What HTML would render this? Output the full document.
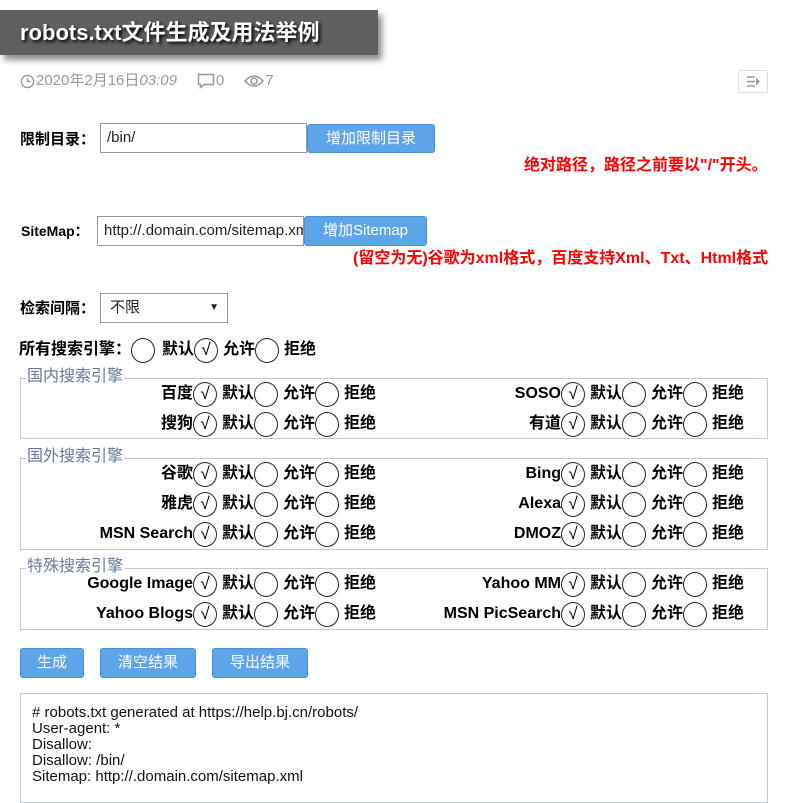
<!DOCTYPE html>
<html><head><meta charset="utf-8"><style>
*{margin:0;padding:0;box-sizing:border-box}
body{width:785px;height:785px;background:#fff;position:relative;overflow:hidden;font-family:"Liberation Sans","Noto Sans CJK SC",sans-serif;color:#000}
.a{position:absolute;white-space:nowrap}
.title{left:0;top:10px;width:378px;height:45px;background:#5f5f5f;box-shadow:4px 5px 6px rgba(0,0,0,.45);color:#fff;font-weight:bold;font-size:22px;line-height:45px;padding-left:20px;text-shadow:2px 2px 3px #000}
.meta{top:71px;left:20px;font-size:15px;color:#999;line-height:20px;display:flex;align-items:center}
.meta svg{margin-right:1px}
.lbl{font-size:15px;font-weight:bold}
.inp{border:1px solid #999;height:30px;font-size:15px;line-height:28px;padding-left:6px;color:#222;overflow:hidden;background:#fff}
.btn{background:#5ea4e8;border:1px solid #4a90d9;border-radius:3px;color:#fff;font-size:15px;text-align:center}
.red{color:#f00;font-weight:bold;font-size:16px}
.g{position:absolute;height:26px;display:flex;align-items:center;font-size:16px;font-weight:bold;line-height:26px}
.g .l{position:absolute;right:100%;top:0;line-height:26px;font-size:16px;font-weight:bold;white-space:nowrap}
.c{display:inline-block;width:24px;height:25px;border:1.5px solid #222;border-radius:50%;font-size:17px;line-height:22px;text-align:center;font-weight:normal;margin-right:5px;flex:none}
.t{display:inline-block;width:32px;font-weight:bold;white-space:nowrap;line-height:26px}
.fs{position:absolute;left:20px;width:748px;border:1px solid #c3c9d9}
.lg{position:absolute;left:26px;font-size:16px;color:#6b7899;background:#fff;padding:0 1px;line-height:18px}
</style></head><body>
<div class="a title">robots.txt文件生成及用法举例</div>
<div class="a meta"><svg width="15" height="15" viewBox="0 0 16 16"><circle cx="8" cy="8" r="6.5" fill="none" stroke="#999" stroke-width="1.5"/><path d="M8 4v4h3.5" fill="none" stroke="#999" stroke-width="1.5"/></svg>2020年2月16日<i>03:09</i><span style="width:20px"></span><svg width="18" height="16" viewBox="0 0 18 16"><path d="M1.5 1.5h15v10h-9l-4 3v-3h-2z" fill="none" stroke="#999" stroke-width="1.5"/></svg>0<span style="width:20px"></span><svg width="20" height="14" viewBox="0 0 20 14"><path d="M1 7Q10 -3 19 7Q10 17 1 7z" fill="none" stroke="#999" stroke-width="1.5"/><circle cx="10" cy="7" r="3" fill="none" stroke="#999" stroke-width="1.5"/></svg>7</div>
<div class="a" style="left:738px;top:70px;width:30px;height:23px;border:1px solid #ddd;border-radius:2px"><svg width="28" height="21" viewBox="0 0 28 21"><path d="M8 6h8M8 10.5h8M8 15h8" stroke="#999" stroke-width="1.6"/><path d="M17 6.5l4 4-4 4z" fill="#999"/></svg></div>

<div class="a lbl" style="left:20px;top:128px">限制目录：</div>
<div class="a inp" style="left:100px;top:123px;width:207px">/bin/</div>
<div class="a btn" style="left:307px;top:124px;width:128px;height:29px;line-height:27px">增加限制目录</div>
<div class="a red" style="left:524px;top:151px">绝对路径，路径之前要以"/"开头。</div>

<div class="a lbl" style="left:21px;top:221px;font-size:14px">SiteMap：</div>
<div class="a inp" style="left:97px;top:216px;width:207px">http://.domain.com/sitemap.xml</div>
<div class="a btn" style="left:304px;top:216px;width:123px;height:30px;line-height:28px">增加Sitemap</div>
<div class="a red" style="left:353px;top:244px">(留空为无)谷歌为xml格式，百度支持Xml、Txt、Html格式</div>

<div class="a lbl" style="left:20px;top:297px">检索间隔：</div>
<div class="a inp" style="left:100px;top:293px;width:128px;padding-left:9px">不限<span style="position:absolute;right:8px;top:0;font-size:10px">▼</span></div>

<div class="g" style="left:131px;top:337px"><span class="l" style="right:100%">所有搜索引擎：</span><i class="c" style="margin-right:7px"></i><b class="t">默认</b><i class="c">√</i><b class="t">允许</b><i class="c"></i><b class="t">拒绝</b></div>

<div class="fs" style="top:378px;height:61px"></div><div class="a lg" style="top:368px">国内搜索引擎</div>
<div class="fs" style="top:458px;height:92px"></div><div class="a lg" style="top:448px">国外搜索引擎</div>
<div class="fs" style="top:568px;height:62px"></div><div class="a lg" style="top:558px">特殊搜索引擎</div>

<div class="g" style="left:193px;top:381px"><span class="l">百度</span><i class="c">√</i><b class="t">默认</b><i class="c"></i><b class="t">允许</b><i class="c"></i><b class="t">拒绝</b></div>
<div class="g" style="left:561px;top:381px"><span class="l">SOSO</span><i class="c">√</i><b class="t">默认</b><i class="c"></i><b class="t">允许</b><i class="c"></i><b class="t">拒绝</b></div>
<div class="g" style="left:193px;top:411px"><span class="l">搜狗</span><i class="c">√</i><b class="t">默认</b><i class="c"></i><b class="t">允许</b><i class="c"></i><b class="t">拒绝</b></div>
<div class="g" style="left:561px;top:411px"><span class="l">有道</span><i class="c">√</i><b class="t">默认</b><i class="c"></i><b class="t">允许</b><i class="c"></i><b class="t">拒绝</b></div>

<div class="g" style="left:193px;top:461px"><span class="l">谷歌</span><i class="c">√</i><b class="t">默认</b><i class="c"></i><b class="t">允许</b><i class="c"></i><b class="t">拒绝</b></div>
<div class="g" style="left:561px;top:461px"><span class="l">Bing</span><i class="c">√</i><b class="t">默认</b><i class="c"></i><b class="t">允许</b><i class="c"></i><b class="t">拒绝</b></div>
<div class="g" style="left:193px;top:491px"><span class="l">雅虎</span><i class="c">√</i><b class="t">默认</b><i class="c"></i><b class="t">允许</b><i class="c"></i><b class="t">拒绝</b></div>
<div class="g" style="left:561px;top:491px"><span class="l">Alexa</span><i class="c">√</i><b class="t">默认</b><i class="c"></i><b class="t">允许</b><i class="c"></i><b class="t">拒绝</b></div>
<div class="g" style="left:193px;top:521px"><span class="l">MSN Search</span><i class="c">√</i><b class="t">默认</b><i class="c"></i><b class="t">允许</b><i class="c"></i><b class="t">拒绝</b></div>
<div class="g" style="left:561px;top:521px"><span class="l">DMOZ</span><i class="c">√</i><b class="t">默认</b><i class="c"></i><b class="t">允许</b><i class="c"></i><b class="t">拒绝</b></div>

<div class="g" style="left:193px;top:571px"><span class="l">Google Image</span><i class="c">√</i><b class="t">默认</b><i class="c"></i><b class="t">允许</b><i class="c"></i><b class="t">拒绝</b></div>
<div class="g" style="left:561px;top:571px"><span class="l">Yahoo MM</span><i class="c">√</i><b class="t">默认</b><i class="c"></i><b class="t">允许</b><i class="c"></i><b class="t">拒绝</b></div>
<div class="g" style="left:193px;top:601px"><span class="l">Yahoo Blogs</span><i class="c">√</i><b class="t">默认</b><i class="c"></i><b class="t">允许</b><i class="c"></i><b class="t">拒绝</b></div>
<div class="g" style="left:561px;top:601px"><span class="l">MSN PicSearch</span><i class="c">√</i><b class="t">默认</b><i class="c"></i><b class="t">允许</b><i class="c"></i><b class="t">拒绝</b></div>

<div class="a btn" style="left:20px;top:648px;width:64px;height:30px;line-height:28px">生成</div>
<div class="a btn" style="left:100px;top:648px;width:96px;height:30px;line-height:28px">清空结果</div>
<div class="a btn" style="left:212px;top:648px;width:96px;height:30px;line-height:28px">导出结果</div>

<div class="a" style="left:20px;top:693px;width:748px;height:110px;border:1px solid #c3c9d9;padding:11px 0 0 11px;font-size:15px;line-height:16px;color:#111">
# robots.txt generated at https://help.bj.cn/robots/<br>User-agent: *<br>Disallow:<br>Disallow: /bin/<br>Sitemap: http://.domain.com/sitemap.xml</div>
</body></html>
